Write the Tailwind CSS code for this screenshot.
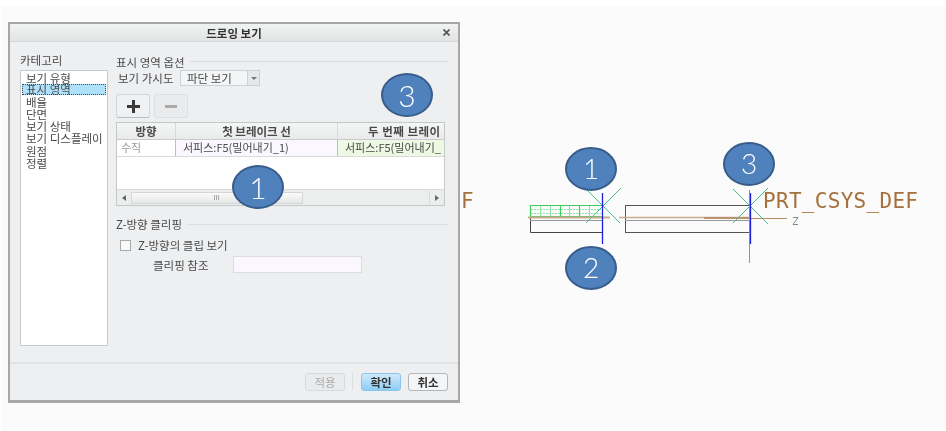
<!DOCTYPE html>
<html><head><meta charset="utf-8"><script src="https://cdn.jsdelivr.net/npm/@tailwindcss/browser@4"></script></head>
<body class="bg-white overflow-hidden">
<div class="relative w-[946px] h-[431px] overflow-hidden pt-[6px] pl-px font-['Noto_Sans_CJK_KR','Noto_Sans',sans-serif] text-[11.5px] leading-[12px] text-[#4a4a4a]">
 <div class="w-[945px] h-[424px] bg-[#fbfbfb] pt-[16px] pl-[7px]">
  <!-- dialog -->
  <div class="relative w-[452px] h-[381px] border-[2px] border-[#a6a8a8] border-b-[3px] bg-[#eeeff1] flex flex-col blur-[0.35px]">
   <div class="h-[18px] shrink-0 bg-gradient-to-b from-[#f1f2f2] to-[#e2e4e5] border-b border-[#d6d8da] flex items-center justify-center relative font-bold text-[#333]">드로잉 보기
     <svg class="absolute right-[8px] top-[5px]" width="7" height="7" viewBox="0 0 7 7"><path d="M0.5 0.5L6.5 6.5M6.5 0.5L0.5 6.5" stroke="#555" stroke-width="1.7"/></svg>
   </div>
   <div class="flex-1 flex pl-[10px] pt-[11px] min-h-0">
    <div class="w-[88px] shrink-0 flex flex-col">
      <div class="h-[17px] pt-px">카테고리</div>
      <div class="w-[88px] h-[276px] bg-white border border-[#c9cacb] pt-[1px] pl-[1px]">
        <div class="h-[12px] pl-[4px]">보기 유형</div>
        <div class="h-[11px] mb-px w-[84px] pl-[3px] bg-[#b0e1fb] border border-dotted border-[#444] leading-[9px]">표시 영역</div>
        <div class="h-[12px] pl-[4px]">배율</div>
        <div class="h-[12px] pl-[4px]">단면</div>
        <div class="h-[12px] pl-[4px]">보기 상태</div>
        <div class="h-[12px] pl-[4px] mb-px">보기 디스플레이</div>
        <div class="h-[12px] pl-[4px]">원점</div>
        <div class="h-[12px] pl-[4px]">정렬</div>
      </div>
    </div>
    <div class="w-[332px] ml-[8px] flex flex-col">
      <div class="flex items-center gap-[5px] h-[17px]"><span>표시 영역 옵션</span><span class="flex-1 h-px bg-[#dcdddf]"></span></div>
      <div class="flex items-center h-[16px] pl-[2px]"><span class="w-[62px]">보기 가시도</span>
        <div class="w-[80px] h-[16px] border border-[#cfd0d2] flex items-center bg-[#f4f5f6]"><span class="flex-1 pl-[6px]">파단 보기</span><span class="w-[12px] h-[14px] border-l border-[#cfd0d2] bg-[#e6e7e8] flex items-center justify-center"><svg width="6" height="3"><path d="M0 0H6L3 3Z" fill="#777"/></svg></span></div>
      </div>
      <div class="flex gap-[4px] mt-[8px]">
        <div class="w-[34px] h-[24px] rounded-[3px] border border-[#d4d5d7] bg-[#f0f1f2] border-b-[#bbb] flex items-center justify-center"><svg width="13" height="13"><path d="M5 0H8V5H13V8H8V13H5V8H0V5H5Z" fill="#3a3a3a"/></svg></div>
        <div class="w-[34px] h-[24px] rounded-[3px] border border-[#dedfe1] bg-[#eaebed] flex items-center justify-center"><svg width="12" height="3"><rect width="12" height="3" fill="#aaa"/></svg></div>
      </div>
      <div class="w-[329px] h-[84px] mt-[4px] border border-[#c6c7c9] bg-white flex flex-col">
        <div class="h-[17px] flex font-bold text-[#4a4a4a] bg-gradient-to-b from-[#f4f5f5] to-[#e9eaeb] border-b border-[#c9cacb] overflow-hidden">
          <div class="w-[59px] shrink-0 text-center border-r border-[#d8d9da] leading-[16px]">방향</div>
          <div class="w-[162px] shrink-0 text-center border-r border-[#d8d9da] leading-[16px]">첫 브레이크 선</div>
          <div class="flex-1 whitespace-nowrap overflow-hidden pl-[30px] leading-[16px] tracking-[0.5px]">두 번째 브레이</div>
        </div>
        <div class="h-[17px] flex border-b border-[#d8d9da] overflow-hidden text-[11px]">
          <div class="w-[59px] shrink-0 pl-[4px] text-[#999] border-r border-[#bdbebf] leading-[15px]">수직</div>
          <div class="w-[162px] shrink-0 pl-[7px] bg-[#faf8fe] border-r border-[#bdbebf] leading-[15px] whitespace-nowrap">서피스:F5(밀어내기_1)</div>
          <div class="flex-1 pl-[7px] bg-[#eef9e4] leading-[15px] whitespace-nowrap overflow-hidden">서피스:F5(밀어내기_</div>
        </div>
        <div class="flex-1"></div>
        <div class="h-[16px] flex items-center bg-[#eceded] border-t border-[#d8d9da]">
          <div class="w-[14px] flex justify-center"><svg width="4" height="6"><path d="M4 0V6L0 3Z" fill="#666"/></svg></div>
          <div class="w-[172px] h-[12px] bg-gradient-to-b from-[#fafafa] to-[#e6e7e8] border border-[#d5d6d7] flex items-center justify-center"><svg width="6" height="5"><path d="M.5 0V5M2.5 0V5M4.5 0V5" stroke="#aaa"/></svg></div>
          <div class="flex-1"></div>
          <div class="w-[15px] h-[14px] border-l border-[#d8d9da] flex justify-center items-center"><svg width="4" height="6"><path d="M0 0V6L4 3Z" fill="#666"/></svg></div>
        </div>
      </div>
      <div class="flex items-center gap-[5px] h-[14px] mt-[11px]"><span>Z-방향 클리핑</span><span class="flex-1 h-px bg-[#dcdddf]"></span></div>
      <div class="flex items-center h-[14px] mt-[7px] pl-[4px]"><span class="w-[11px] h-[11px] border border-[#a9aaab] bg-[#f8f8f8]"></span><span class="ml-[7px]">Z-방향의 클립 보기</span></div>
      <div class="flex items-center h-[17px] mt-[4px] pl-[37px]"><span class="w-[80px]">클리핑 참조</span><span class="w-[129px] h-[17px] border border-[#dcdcdf] bg-[#faf8fe]"></span></div>
    </div>
   </div>
   <div class="h-[38px] shrink-0 border-t-2 border-[#e2e3e5] flex items-center justify-end gap-[7px] pr-[10px] pb-px">
     <div class="w-[40px] h-[18px] rounded-[3px] border border-[#d8d9da] bg-[#eaebec] text-[#aaa] flex items-center justify-center">적용</div>
     <div class="w-px h-[17px] bg-[#dcdddf]"></div>
     <div class="w-[40px] h-[18px] ml-[1px] rounded-[3px] border border-[#8cc4ea] bg-gradient-to-b from-[#cfeafc] to-[#8ecdf6] font-bold text-[#333] flex items-center justify-center">확인</div>
     <div class="w-[40px] h-[18px] rounded-[3px] border border-[#b5b6b8] bg-[#f4f5f6] font-bold text-[#333] flex items-center justify-center">취소</div>
   </div>
   <!-- callouts over dialog -->
   <div class="absolute left-[222px] top-[141px] w-[52px] h-[44px] rounded-[50%] bg-[#4f81bd] border-[2px] border-[#385d8a] text-white text-[30px] font-light leading-[40px] text-center font-['Lato',sans-serif]">1</div>
   <div class="absolute left-[371px] top-[49px] w-[52px] h-[44px] rounded-[50%] bg-[#4f81bd] border-[2px] border-[#385d8a] text-white text-[30px] font-light leading-[40px] text-center font-['Lato',sans-serif]">3</div>
  </div>
 </div>
 <!-- CAD canvas -->
 <svg class="absolute left-0 top-0 blur-[0.25px]" width="946" height="431" viewBox="0 0 946 431">
   <g fill="none">
     <path d="M530.5 218V232.5H602" stroke="#444"/>
     <path d="M530 220.5H602" stroke="#999"/>
     <g stroke="#8fe4a0"><path d="M540.5 206V217M550.5 206V217M569.5 206V217M589.5 206V217"/><path d="M531 209.5H601M531 213.5H601" stroke-dasharray="2 1"/></g>
     <g stroke="#3fcc62" stroke-width="1.2"><path d="M530.5 205.5H602M530.5 205.5V218M560.5 205.5V218M579.5 205.5V218M530 216.5H602"/></g>
     <path d="M528 217.5H610" stroke="#c9ab8d" stroke-width="2"/>
     <path d="M587 190L620 223M586 223L621 188" stroke="#45bd8a"/>
     <path d="M602.5 193V244" stroke="#2020e0" stroke-width="1.3"/>
     <rect x="625.5" y="205.5" width="124" height="27" stroke="#555"/>
     <path d="M625 220.5H749" stroke="#999"/>
     <path d="M619 217.5H750" stroke="#c9ab8d" stroke-width="1.5"/>
     <path d="M704 218H749" stroke="#b9926e" stroke-width="2"/>
     <path d="M750 218.5H787" stroke="#b98d62"/>
     <path d="M749.5 190V263" stroke="#b98d62"/>
     <path d="M733 189L768 224M733 223L768 188" stroke="#45bd8a"/>
     <path d="M750.5 193V244" stroke="#2020e0" stroke-width="1.3"/>
     <path d="M793 217.5H798L793 224.5H798" stroke="#888"/>
   </g>
   <g fill="#4f81bd" stroke="#385d8a" stroke-width="2">
     <ellipse cx="591" cy="169" rx="25" ry="21"/>
     <ellipse cx="591" cy="268" rx="25" ry="21"/>
     <ellipse cx="749" cy="164" rx="25" ry="21"/>
   </g>
   <g fill="#fff" font-family="Lato, sans-serif" font-weight="300" font-size="28" text-anchor="middle">
     <text x="591" y="179">1</text><text x="591" y="278">2</text><text x="749" y="174">3</text>
   </g>
   <g fill="#a5703b" font-family="DejaVu Sans Mono, monospace" font-size="21">
     <text x="461" y="208">F</text>
     <text x="763" y="208" letter-spacing="0.3">PRT_CSYS_DEF</text>
   </g>
 </svg>
</div>
</body></html>
